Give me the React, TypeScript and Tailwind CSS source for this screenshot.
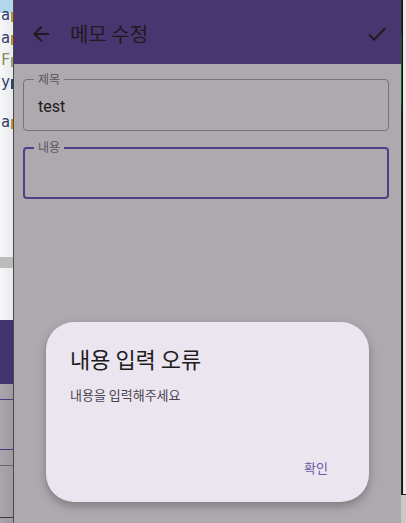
import React from "react";

const ko = { fontFamily: '"Noto Sans CJK KR", "Noto Sans", Roboto, sans-serif' };
const mono = { fontFamily: '"DejaVu Sans Mono", "Liberation Mono", monospace' };

function CodeLine({ top, a, ca, tail }: { top: number; a: string; ca: string; tail?: string }) {
  return (
    <div className="absolute left-[1px] flex items-end" style={{ top }}>
      <span className="text-[15px] leading-none" style={{ color: ca, ...mono }}>{a}</span>
      {tail ? <span className="ml-px mb-[1px] w-[2px] h-[10px]" style={{ background: tail }} /> : null}
    </div>
  );
}

export default function App() {
  return (
    <div className="w-[406px] h-[523px] flex overflow-hidden bg-[#aea9ae]">
      {/* IDE strip on the left */}
      <div className="relative w-[13px] h-full flex flex-col overflow-hidden">
        <div className="h-[13px] bg-[#b4d5ec]" />
        <div className="h-[244px] bg-gradient-to-r from-[#f7f8f9] to-[#e6e8ea]" />
        <div className="h-[11px] bg-[#bcbcbc]" />
        <div className="h-[52px] bg-gradient-to-r from-[#f7f8f9] to-[#e6e8ea]" />
        <div className="h-[64px] bg-[#433370]" />
        <div className="flex-1 bg-gradient-to-r from-[#aba6ac] to-[#9f9aa1] flex flex-col">
          <div className="h-[15px]" />
          <div className="h-px bg-[#4b3c80]" />
          <div className="h-[49px]" />
          <div className="h-px bg-[#4b3c80]" />
          <div className="h-[15px]" />
          <div className="h-px bg-[#6a666c]" />
          <div className="h-[51px]" />
          <div className="h-px bg-[#3d3a3f]" />
        </div>
        <CodeLine top={8} a="a" ca="#2f3e6e" tail="#c98a2a" />
        <CodeLine top={31} a="a" ca="#2f3e6e" tail="#c98a2a" />
        <CodeLine top={53} a="F" ca="#8a8a5a" tail="#a0a07a" />
        <CodeLine top={75} a="y" ca="#2f3e6e" tail="#2f3e6e" />
        <CodeLine top={115} a="a" ca="#2f3e6e" tail="#c98a2a" />
      </div>
      <div className="w-px h-full bg-[#4a4a4a]" />

      {/* Phone */}
      <div className="relative w-[388px] h-full bg-[#aea9ae] flex flex-col">
        <div className="h-[64px] bg-[#483671] flex items-center shrink-0 pt-[4px]">
          <div className="w-[15px]" />
          <svg width="24" height="24" viewBox="0 0 24 24" className="text-[#1d1b20]">
            <path d="M20 11H7.83l5.59-5.59L12 4l-8 8 8 8 1.41-1.41L7.83 13H20v-2z" fill="currentColor" />
          </svg>
          <div className="w-[17px]" />
          <div className="text-[20px] text-[#1d1b20] leading-none" style={ko}>메모 수정</div>
          <div className="flex-1" />
          <svg width="24" height="24" viewBox="0 0 24 24" className="text-[#1d1b20] mr-[12px]">
            <path d="M9 16.17L4.83 12l-1.42 1.41L9 19 21 7l-1.41-1.41z" fill="currentColor" />
          </svg>
        </div>

        <div className="pl-[9px] pr-[12px] pt-[15px] flex flex-col gap-[16px]">
          <div className="relative h-[52px] border border-[#77737b] rounded-[4px] flex items-center pl-[14px] pt-[3px]">
            <span className="absolute left-[10px] top-[-9px] px-[4px] bg-[#aea9ae] text-[12px] text-[#5a5660] leading-[16px]" style={ko}>제목</span>
            <span className="text-[16px] text-[#1d1b20] leading-none" style={{ fontFamily: "Roboto, sans-serif" }}>test</span>
          </div>
          <div className="relative h-[52px] border-2 border-[#4f3f85] rounded-[4px]">
            <span className="absolute left-[9px] top-[-10px] px-[4px] bg-[#aea9ae] text-[12px] text-[#5a5660] leading-[16px]" style={ko}>내용</span>
          </div>
        </div>

        {/* Dialog */}
        <div
          className="absolute left-[32px] top-[322px] w-[323px] h-[180px] rounded-[28px] bg-[#ebe5f0] flex flex-col pl-[24px] pr-[24px] pt-[22px] pb-[24px] shadow-[0_4px_10px_rgba(0,0,0,0.28)]"
          style={ko}
        >
          <div className="text-[22px] text-[#1d1b20] leading-[28px]">내용 입력 오류</div>
          <div className="mt-[13px] text-[13px] text-[#4a4650] leading-[20px]">내용을 입력해주세요</div>
          <div className="flex-1" />
          <div className="flex justify-end pr-[17px]">
            <span className="text-[13px] text-[#6a5aa3] leading-[20px]">확인</span>
          </div>
        </div>
      </div>

      {/* Right edge */}
      <div className="w-[5px] h-full flex flex-col">
        <div className="flex h-[494px]">
          <div className="w-px bg-[#2a2a2a] flex flex-col">
            <div className="h-[35px]" />
            <div className="h-[70px] bg-[#1e5a1e]" />
          </div>
          <div className="w-px bg-[#111]" />
          <div className="flex-1 bg-[#e8e8e8]" />
        </div>
        <div className="h-px bg-[#222]" />
        <div className="flex-1 bg-[#c9c9c9]" />
      </div>
    </div>
  );
}
